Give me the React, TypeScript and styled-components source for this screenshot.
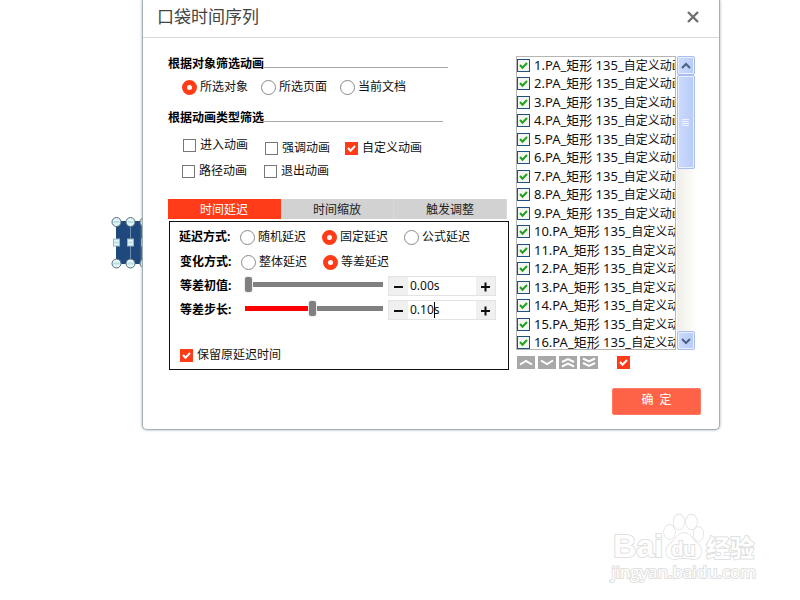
import React, { useState } from "react";
import styled, { createGlobalStyle, css } from "styled-components";

const RED = "#ff3b18";
const tickMark = (color: string) =>
  `url("data:image/svg+xml,%3Csvg xmlns='http://www.w3.org/2000/svg' viewBox='0 0 13 13'%3E%3Cpath d='M3 6 L5.5 8.7 L10 4' fill='none' stroke='${color}' stroke-width='2'/%3E%3C/svg%3E")`;

const GlobalStyle = createGlobalStyle`
  * { box-sizing: border-box; }
  body {
    margin: 0;
    background: #fff;
    color: #111;
    font: 12px/16px "Noto Sans", "Noto Sans CJK SC", sans-serif;
  }
  button, input { font: inherit; color: inherit; margin: 0; padding: 0; }
`;

const Page = styled.main`
  position: relative;
  min-height: 100vh;
  padding: 0 80px 0 142px;
`;

const CanvasShape = styled.svg`
  position: absolute;
  left: 110px;
  top: 215px;
  width: 40px;
  height: 55px;
`;

const Dialog = styled.section`
  position: relative;
  background: #fff;
  border: 1px solid #a3b0b4;
  border-top: 0;
  border-radius: 0 0 5px 5px;
  box-shadow: 0 0 3px #9fb0b5;
`;

const DialogHeader = styled.header`
  display: flex;
  align-items: center;
  justify-content: space-between;
  height: 38px;
  padding: 0 19px 4px 14px;
  border-bottom: 1px solid #d9d9d9;
`;

const Title = styled.h1`
  margin: 0;
  font-size: 17px;
  line-height: 24px;
  font-weight: 400;
  color: #444;
`;

const CloseButton = styled.button`
  display: flex;
  border: 0;
  background: none;
`;

const Body = styled.div`
  display: flex;
  gap: 7px;
  padding: 18px 24px 0 25px;
`;

const Filters = styled.div`
  flex: 1;
  min-width: 0;
`;

const SectionHeading = styled.h2<{ $top: number; $end: number }>`
  display: flex;
  align-items: center;
  height: 16px;
  margin: ${(p) => p.$top}px ${(p) => p.$end}px 0 0;
  font-size: 12px;
  font-weight: 700;
  color: #000;
  &::after {
    content: "";
    flex: 1;
    height: 1px;
    margin-top: 6px;
    background: #a8a8a8;
  }
`;

const OptionRow = styled.div<{ $top: number; $columns: string; $left?: number; $height?: number }>`
  display: grid;
  grid-template-columns: ${(p) => p.$columns};
  align-items: end;
  height: ${(p) => p.$height ?? 16}px;
  margin-top: ${(p) => p.$top}px;
  padding-left: ${(p) => p.$left ?? 0}px;
  white-space: nowrap;
`;

const OptionLabel = styled.label<{ $gap: number; $raised?: boolean }>`
  display: flex;
  align-items: center;
  gap: ${(p) => p.$gap}px;
  height: 16px;
  ${(p) => p.$raised && css`align-self: start;`}
`;

const RadioInput = styled.input`
  appearance: none;
  flex: none;
  width: 15px;
  height: 15px;
  border: 1px solid #8a8a8a;
  border-radius: 50%;
  background: #fff;
  &:checked { border: 5px solid ${RED}; }
`;

const CheckInput = styled.input`
  appearance: none;
  flex: none;
  width: 13px;
  height: 13px;
  border: 1px solid #777;
  background: #fff;
  &:checked {
    border: 0;
    background: ${RED} ${tickMark("white")} center / 13px;
  }
`;

const TabBar = styled.div`
  display: grid;
  grid-template-columns: repeat(3, 1fr);
  height: 20px;
  margin: 20px 2px 0 0;
`;

const Tab = styled.button<{ $active?: boolean }>`
  padding-top: 2px;
  border: 0;
  border-right: 1px solid ${(p) => (p.$active ? RED : "#d9d9d9")};
  background: ${(p) => (p.$active ? RED : "#d2d2d2")};
  color: ${(p) => (p.$active ? "#fff" : "#222")};
  line-height: 18px;
`;

const Panel = styled.div`
  margin: 2px 0 0 1px;
  padding: 7px 12px 6px 9px;
  border: 1px solid #111;
`;

const FieldName = styled.span`
  font-weight: 700;
  color: #000;
`;

const AdjustRow = styled.div<{ $top: number }>`
  display: grid;
  grid-template-columns: 65px 1fr 108px;
  align-items: center;
  height: 20px;
  margin-top: ${(p) => p.$top}px;
  padding-left: 1px;
`;

const Slider = styled.input<{ $fill: number }>`
  appearance: none;
  justify-self: stretch;
  min-width: 0;
  width: auto;
  height: 15px;
  margin: 0 5px 3px 0;
  background: linear-gradient(to right, #f00 ${(p) => p.$fill}%, #808080 ${(p) => p.$fill}%) center / 100% 5px no-repeat;
  &::-webkit-slider-thumb {
    appearance: none;
    width: 7px;
    height: 15px;
    border-radius: 2px;
    background: #808080;
    box-shadow: 0 0 0 1px #eee;
  }
`;

const StepperBox = styled.div`
  position: relative;
  display: grid;
  grid-template-columns: 19px 1fr 19px;
  height: 20px;
  border: 1px solid #e3e3e3;
`;

const StepButton = styled.button`
  display: flex;
  align-items: center;
  justify-content: center;
  border: 0;
  background: #f0f0f0;
`;

const StepInput = styled.input`
  min-width: 0;
  border: 0;
  padding-left: 2px;
  background: #fff;
`;

const Caret = styled.i`
  position: absolute;
  left: 45px;
  top: 1px;
  width: 1px;
  height: 16px;
  background: #000;
`;

const ListColumn = styled.div`
  width: 179px;
`;

const ListFrame = styled.div`
  display: flex;
  gap: 1px;
  height: 294px;
`;

const ListViewport = styled.div`
  flex: 1;
  min-width: 0;
  overflow: hidden;
  border: 1px solid #b5b5b5;
`;

const List = styled.ul`
  display: grid;
  grid-auto-rows: 1fr;
  height: 296px;
  margin: 0;
  padding: 0;
  list-style: none;
`;

const ListLabel = styled.label`
  display: flex;
  align-items: center;
  gap: 4px;
  height: 16px;
  font-size: 13px;
  white-space: nowrap;
`;

const EffectName = styled.span`
  font-size: 12px;
`;

const ListCheck = styled.input`
  appearance: none;
  flex: none;
  width: 13px;
  height: 13px;
  border: 1px solid #1c5180;
  background: #f4f4f1;
  &:checked { background: #f4f4f1 ${tickMark("%2321a121")} center / 13px; }
`;

const ScrollTrack = styled.div`
  display: flex;
  flex-direction: column;
  width: 18px;
  background: linear-gradient(to right, #efeee8, #fdfdfb);
`;

const scrollFace = css`
  display: flex;
  align-items: center;
  justify-content: center;
  border: 1px solid #a9bdf0;
  border-radius: 2px;
  box-shadow: inset 0 0 0 1px #e8efff;
  background: linear-gradient(to right, #cbdafe, #b8cbf8);
`;

const ScrollButton = styled.button<{ $end?: boolean }>`
  ${scrollFace}
  height: 19px;
  margin-top: ${(p) => (p.$end ? "auto" : "0")};
`;

const ScrollThumb = styled.div`
  ${scrollFace}
  height: 94px;
`;

const OrderBar = styled.div`
  display: flex;
  gap: 3px;
  align-items: center;
  margin-top: 6px;
  padding-left: 1px;
`;

const OrderButton = styled.button`
  display: flex;
  align-items: center;
  justify-content: center;
  width: 18px;
  height: 13px;
  border: 0;
  background: #a8a8a8;
`;

const SelectAll = styled(CheckInput)`
  margin-left: 16px;
`;

const DialogFooter = styled.footer`
  display: flex;
  justify-content: flex-end;
  padding: 18px 18px 14px;
`;

const ConfirmButton = styled.button`
  width: 89px;
  height: 27px;
  padding-bottom: 3px;
  border: 1px solid #ff7a63;
  border-radius: 2px;
  background: #ff6347;
  color: #fff;
`;

const Watermark = styled.div`
  position: absolute;
  right: 44px;
  bottom: 17px;
  color: #fff;
  -webkit-text-stroke: 2px #e0e0e0;
  paint-order: stroke fill;
`;

const Brand = styled.div`
  display: flex;
  align-items: flex-end;
  height: 48px;
  padding-left: 2px;
`;

const BrandLatin = styled.span`
  font: 700 32px/30px "Liberation Sans", Arial, sans-serif;
`;

const BrandChinese = styled.span`
  font: 700 24px/28px "Noto Sans CJK SC", sans-serif;
`;

const PawFrame = styled.span`
  position: relative;
  display: flex;
  width: 43px;
  height: 48px;
`;

const PawText = styled.span`
  position: absolute;
  left: 8px;
  top: 25px;
  font: 700 20px/22px "Liberation Sans", Arial, sans-serif;
`;

const Domain = styled.div`
  font: 400 17px/22px "Open Sans", sans-serif;
`;

type OptionProps = { text: string; name?: string; checked?: boolean; raised?: boolean };

const Radio = ({ text, name, checked }: OptionProps) => (
  <OptionLabel $gap={3}>
    <RadioInput type="radio" name={name} defaultChecked={checked} />
    {text}
  </OptionLabel>
);

const Check = ({ text, checked, raised }: OptionProps) => (
  <OptionLabel $gap={4} $raised={raised}>
    <CheckInput type="checkbox" defaultChecked={checked} />
    {text}
  </OptionLabel>
);

const Sign = ({ plus }: { plus?: boolean }) => (
  <svg width="11" height="11" viewBox="0 0 11 11" stroke="#111" strokeWidth="2" aria-hidden="true">
    <path d={plus ? "M1 6H10M5.5 1.5V10.5" : "M1 6H10"} />
  </svg>
);

function Adjuster({ label, top, start, initial, caret }: { label: string; top: number; start: number; initial: string; caret?: boolean }) {
  const [position, setPosition] = useState(start);
  const [value, setValue] = useState(initial);
  const shift = (amount: number) => setValue(`${Math.max(0, (parseFloat(value) || 0) + amount).toFixed(2)}s`);
  return (
    <AdjustRow $top={top}>
      <FieldName>{label}</FieldName>
      <Slider type="range" aria-label={label} value={position} $fill={position} onChange={(e) => setPosition(Number(e.target.value))} />
      <StepperBox>
        <StepButton aria-label="减少" onClick={() => shift(-0.01)}><Sign /></StepButton>
        <StepInput aria-label={label} value={value} onChange={(e) => setValue(e.target.value)} />
        <StepButton aria-label="增加" onClick={() => shift(0.01)}><Sign plus /></StepButton>
        {caret && <Caret />}
      </StepperBox>
    </AdjustRow>
  );
}

const orderActions = [
  { name: "上移", path: "M3 8.5L9 5L15 8.5" },
  { name: "下移", path: "M3 4.5L9 8L15 4.5" },
  { name: "置顶", path: "M3 6L9 3L15 6M3 10.5L9 7.5L15 10.5" },
  { name: "置底", path: "M3 2.5L9 5.5L15 2.5M3 7L9 10L15 7" },
];

const items = Array.from({ length: 16 }, (_, i) => ({ shape: `${i + 1}.PA_矩形 135_`, effect: "自定义动画" }));

export default function App() {
  return (
    <Page>
      <GlobalStyle />
      <CanvasShape viewBox="0 0 40 55" aria-hidden="true">
        <path d="M6 6H40V49H6Z" fill="#1f497d" />
        <path d="M20.5 6V49" stroke="#6d8db5" />
        <g fill="#e3f5f8" stroke="#526b78">
          {[6.5, 20.5, 34.5].map((x) => (
            <React.Fragment key={x}>
              <circle cx={x} cy="7" r="4.5" />
              <circle cx={x} cy="48.5" r="4.5" />
              <rect x={x - 3} y="24" width="6" height="7" stroke="#9ab4c2" />
              <path d={`M${x - 3} 7H${x + 3}M${x - 3} 48.5H${x + 3}M${x - 2} 27.5H${x + 2}`} stroke="#b5dfe5" strokeWidth="2" />
            </React.Fragment>
          ))}
        </g>
      </CanvasShape>

      <Dialog aria-label="口袋时间序列">
        <DialogHeader>
          <Title>口袋时间序列</Title>
          <CloseButton aria-label="关闭">
            <svg width="14" height="14" viewBox="0 0 14 14" stroke="#707070" strokeWidth="2.4">
              <path d="M2 2L12 12M12 2L2 12" />
            </svg>
          </CloseButton>
        </DialogHeader>

        <Body>
          <Filters>
            <SectionHeading $top={0} $end={61}>根据对象筛选动画</SectionHeading>
            <OptionRow $top={7} $left={14} $columns="79px 79px 1fr">
              <Radio name="scope" text="所选对象" checked />
              <Radio name="scope" text="所选页面" />
              <Radio name="scope" text="当前文档" />
            </OptionRow>

            <SectionHeading $top={15} $end={66}>根据动画类型筛选</SectionHeading>
            <OptionRow $top={11} $left={15} $height={19} $columns="82px 80px 1fr">
              <Check text="进入动画" raised />
              <Check text="强调动画" />
              <Check text="自定义动画" checked />
            </OptionRow>
            <OptionRow $top={7} $left={14} $columns="82px 80px">
              <Check text="路径动画" />
              <Check text="退出动画" />
            </OptionRow>

            <TabBar role="tablist">
              <Tab role="tab" aria-selected="true" $active>时间延迟</Tab>
              <Tab role="tab" aria-selected="false">时间缩放</Tab>
              <Tab role="tab" aria-selected="false">触发调整</Tab>
            </TabBar>
            <Panel role="tabpanel">
              <OptionRow $top={0} $columns="61px 82px 82px 1fr">
                <FieldName>延迟方式:</FieldName>
                <Radio name="delay" text="随机延迟" />
                <Radio name="delay" text="固定延迟" checked />
                <Radio name="delay" text="公式延迟" />
              </OptionRow>
              <OptionRow $top={9} $left={1} $columns="61px 82px 1fr">
                <FieldName>变化方式:</FieldName>
                <Radio name="change" text="整体延迟" />
                <Radio name="change" text="等差延迟" checked />
              </OptionRow>
              <Adjuster label="等差初值:" top={6} start={0} initial="0.00s" />
              <Adjuster label="等差步长:" top={4} start={49} initial="0.10s" caret />
              <OptionRow $top={27} $left={1} $columns="1fr">
                <Check text="保留原延迟时间" checked />
              </OptionRow>
            </Panel>
          </Filters>

          <ListColumn>
            <ListFrame>
              <ListViewport>
                <List>
                  {items.map((item) => (
                    <li key={item.shape}>
                      <ListLabel>
                        <ListCheck type="checkbox" defaultChecked />
                        <span>{item.shape}<EffectName>{item.effect}</EffectName></span>
                      </ListLabel>
                    </li>
                  ))}
                </List>
              </ListViewport>
              <ScrollTrack>
                <ScrollButton aria-label="向上滚动">
                  <svg width="10" height="8" viewBox="0 0 10 8" fill="none" stroke="#4d6185" strokeWidth="2"><path d="M1 6L5 2L9 6" /></svg>
                </ScrollButton>
                <ScrollThumb>
                  <svg width="8" height="9" viewBox="0 0 8 9" stroke="#eef4fe"><path d="M0 1.5H7M0 3.5H7M0 5.5H7M0 7.5H7" /></svg>
                </ScrollThumb>
                <ScrollButton $end aria-label="向下滚动">
                  <svg width="10" height="8" viewBox="0 0 10 8" fill="none" stroke="#4d6185" strokeWidth="2"><path d="M1 2L5 6L9 2" /></svg>
                </ScrollButton>
              </ScrollTrack>
            </ListFrame>
            <OrderBar>
              {orderActions.map((action) => (
                <OrderButton key={action.name} aria-label={action.name}>
                  <svg width="18" height="13" viewBox="0 0 18 13" fill="none" stroke="#fff" strokeWidth="2"><path d={action.path} /></svg>
                </OrderButton>
              ))}
              <SelectAll type="checkbox" aria-label="全选" defaultChecked />
            </OrderBar>
          </ListColumn>
        </Body>

        <DialogFooter>
          <ConfirmButton>确&ensp;定</ConfirmButton>
        </DialogFooter>
      </Dialog>

      <Watermark>
        <Brand>
          <BrandLatin>Bai</BrandLatin>
          <PawFrame>
            <svg width="41" height="48" viewBox="0 0 41 48" fill="#fff" stroke="#dcdcdc" strokeWidth="1.3" aria-hidden="true">
              <ellipse cx="6.5" cy="19" rx="5.5" ry="7" />
              <ellipse cx="16" cy="9" rx="5.5" ry="7.5" />
              <ellipse cx="28.5" cy="9" rx="5.5" ry="7.5" />
              <ellipse cx="35.5" cy="21" rx="5" ry="7" />
              <path d="M21 20C27 20 29 26 34 30C41 36 39 46 31 46C27 46 25 45 21 45C17 45 15 46 11 46C2 46 1 36 7 31C12 27 14 20 21 20Z" />
            </svg>
            <PawText>du</PawText>
          </PawFrame>
          <BrandChinese>经验</BrandChinese>
        </Brand>
        <Domain>jingyan.baidu.com</Domain>
      </Watermark>
    </Page>
  );
}
